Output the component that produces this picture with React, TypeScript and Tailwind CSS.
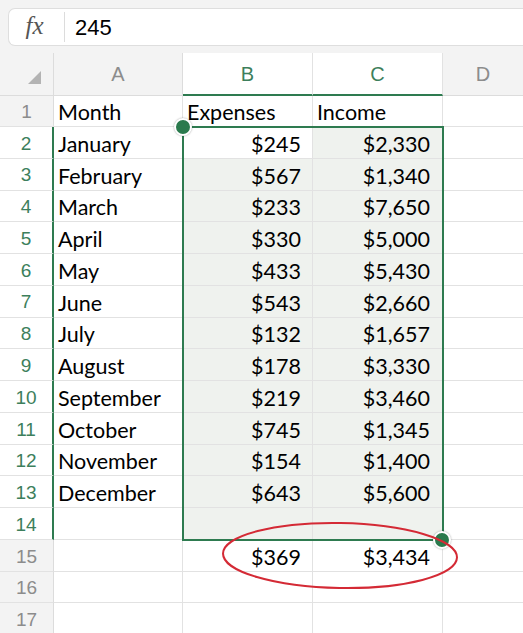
import React from "react";

const rows: [string, string, string][] = [
  ["January", "$245", "$2,330"],
  ["February", "$567", "$1,340"],
  ["March", "$233", "$7,650"],
  ["April", "$330", "$5,000"],
  ["May", "$433", "$5,430"],
  ["June", "$543", "$2,660"],
  ["July", "$132", "$1,657"],
  ["August", "$178", "$3,330"],
  ["September", "$219", "$3,460"],
  ["October", "$745", "$1,345"],
  ["November", "$154", "$1,400"],
  ["December", "$643", "$5,600"],
  ["", "", ""],
];

const cellFont = { fontFamily: "Lato, 'Open Sans', sans-serif" };
const hdrFont = { fontFamily: "'Liberation Sans', Arial, sans-serif" };

function RowNum({ n, sel }: { n: number; sel?: boolean }) {
  return (
    <div
      className={
        "w-[54px] shrink-0 h-full flex items-center justify-center pt-[3px] text-[19px] border-b border-[#e2e2e2] " +
        (sel
          ? "bg-white text-[#3d7f5c] border-r-2 border-r-[#2e7b50]"
          : "bg-[#f3f3f3] text-[#8c8c8c] border-r border-r-[#dcdcdc]")
      }
      style={hdrFont}
    >
      {n}
    </div>
  );
}

export default function App() {
  return (
    <div className="relative w-[523px] h-[633px] overflow-hidden bg-white" style={cellFont}>
      {/* formula bar */}
      <div className="h-[53px] bg-[#f3f3f3] pt-[8px] pl-[8px]">
        <div className="h-[38px] bg-white border border-r-0 border-[#dedede] rounded-l-[7px] flex items-center">
          <div
            className="w-[55px] h-full flex items-center justify-center text-[25px] italic text-[#555] pr-[4px] pb-[2px]"
            style={{ fontFamily: "'Liberation Serif', 'DejaVu Serif', serif" }}
          >
            fx
          </div>
          <div className="w-px h-[30px] bg-[#dcdcdc]" />
          <div className="pl-[10px] text-[22px] text-black" style={hdrFont}>
            245
          </div>
        </div>
      </div>

      {/* column headers */}
      <div className="flex h-[43px] text-[20px]" style={hdrFont}>
        <div className="w-[54px] shrink-0 bg-[#f3f3f3] border-r border-b border-[#dcdcdc] relative">
          <svg className="absolute left-[27px] top-[17px]" width="15" height="15" viewBox="0 0 15 15">
            <polygon points="14,1 14,14 1,14" fill="#b3b3b3" />
          </svg>
        </div>
        <div className="w-[129px] shrink-0 bg-[#f3f3f3] border-r border-b border-[#dcdcdc] flex items-center justify-center text-[#8c8c8c]">
          A
        </div>
        <div className="w-[130px] shrink-0 bg-white border-r border-[#e2e2e2] border-b-2 border-b-[#2e7b50] flex items-center justify-center text-[#3d7f5c]">
          B
        </div>
        <div className="w-[130px] shrink-0 bg-white border-r border-[#e2e2e2] border-b-2 border-b-[#2e7b50] flex items-center justify-center text-[#3d7f5c]">
          C
        </div>
        <div className="flex-1 bg-[#f3f3f3] border-b border-[#dcdcdc] flex items-center justify-center text-[#8c8c8c]">
          D
        </div>
      </div>

      {/* row 1 */}
      <div className="flex h-[31px] text-[21.5px] text-black">
        <RowNum n={1} />
        <div className="w-[129px] shrink-0 border-r border-b border-[#e2e2e2] pl-[4px] pt-[3px] flex items-center">Month</div>
        <div className="w-[130px] shrink-0 border-r border-b border-[#e2e2e2] pl-[4px] pt-[3px] flex items-center">Expenses</div>
        <div className="w-[130px] shrink-0 border-r border-b border-[#e2e2e2] pl-[4px] pt-[3px] flex items-center">Income</div>
        <div className="flex-1 border-b border-[#e2e2e2]" />
      </div>

      {rows.map((r, i) => (
        <div key={i} className="flex h-[31.77px] text-[21.5px] text-black">
          <RowNum n={i + 2} sel />
          <div className="w-[129px] shrink-0 border-r border-b border-[#e2e2e2] pl-[4px] pt-[3px] flex items-center">{r[0]}</div>
          <div
            className={
              "w-[130px] shrink-0 border-r border-b border-[#e2e2e2] pr-[11px] pt-[3px] flex items-center justify-end " +
              (i === 0 ? "bg-white" : "bg-[#eff2ee]")
            }
          >
            {r[1]}
          </div>
          <div className="w-[130px] shrink-0 border-r border-b border-[#e2e2e2] bg-[#eff2ee] pr-[12px] pt-[3px] flex items-center justify-end">
            {r[2]}
          </div>
          <div className="flex-1 border-b border-[#e2e2e2]" />
        </div>
      ))}

      {[15, 16, 17].map((n) => (
        <div key={n} className="flex h-[31.77px] text-[21.5px] text-black">
          <RowNum n={n} />
          <div className="w-[129px] shrink-0 border-r border-b border-[#e2e2e2]" />
          <div className="w-[130px] shrink-0 border-r border-b border-[#e2e2e2] pr-[11px] pt-[3px] flex items-center justify-end">
            {n === 15 ? "$369" : ""}
          </div>
          <div className="w-[130px] shrink-0 border-r border-b border-[#e2e2e2] pr-[12px] pt-[3px] flex items-center justify-end">
            {n === 15 ? "$3,434" : ""}
          </div>
          <div className="flex-1 border-b border-[#e2e2e2]" />
        </div>
      ))}

      {/* selection overlay */}
      <div className="absolute left-[182px] top-[126px] w-[262px] h-[415px] border-2 border-[#2e7b50] pointer-events-none" />
      <div className="absolute left-[174px] top-[118px] w-[18px] h-[18px] rounded-full bg-[#2a7a4d] border-2 border-white shadow-[0_0_2px_rgba(0,0,0,0.35)]" />
      <div className="absolute left-[433px] top-[531px] w-[18px] h-[18px] rounded-full bg-[#2a7a4d] border-2 border-white shadow-[0_0_2px_rgba(0,0,0,0.35)]" />

      {/* red ellipse */}
      <svg className="absolute left-0 top-0 pointer-events-none" width="523" height="633">
        <ellipse
          cx="340"
          cy="555.5"
          rx="117"
          ry="32.5"
          fill="none"
          stroke="#d42a35"
          strokeWidth="2"
          transform="rotate(1 340 555.5)"
        />
      </svg>
    </div>
  );
}
